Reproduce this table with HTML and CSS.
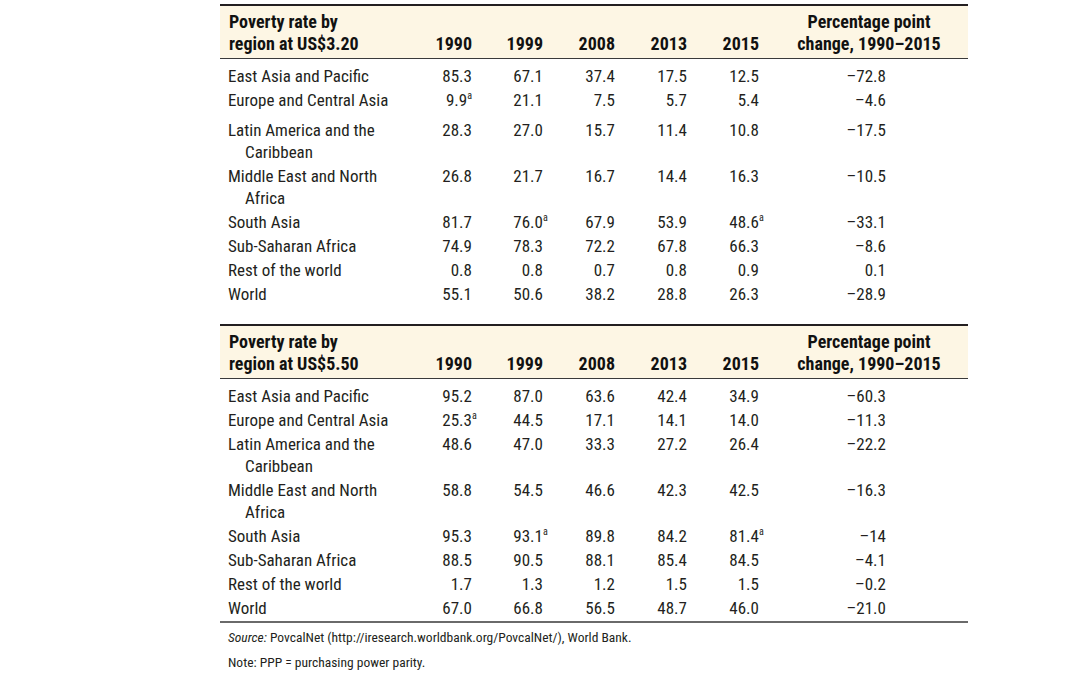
FILE: index.html
```html
<!DOCTYPE html>
<html lang="en">
<head>
<meta charset="utf-8">
<title>Poverty rate by region</title>
<link rel="stylesheet" href="styles.css">
</head>
<body>
<div class="page">
  <table class="ptable">
    <colgroup>
      <col class="c-label"><col class="c-y72"><col class="c-y71"><col class="c-y72"><col class="c-y72"><col class="c-y72"><col class="c-pct">
    </colgroup>
    <thead>
      <tr>
        <th class="lbl">Poverty rate by<br>region at US$3.20</th>
        <th class="num">1990</th>
        <th class="num">1999</th>
        <th class="num">2008</th>
        <th class="num">2013</th>
        <th class="num">2015</th>
        <th class="pct">Percentage point<br>change, 1990–2015</th>
      </tr>
    </thead>
    <tbody>
      <tr class="first"><td class="lbl">East Asia and Pacific</td><td class="num">85.3</td><td class="num">67.1</td><td class="num">37.4</td><td class="num">17.5</td><td class="num">12.5</td><td class="pct">–72.8</td></tr>
      <tr><td class="lbl">Europe and Central Asia</td><td class="num">9.9<span class="fn-in">a</span></td><td class="num">21.1</td><td class="num">7.5</td><td class="num">5.7</td><td class="num">5.4</td><td class="pct">–4.6</td></tr>
      <tr class="gap"><td class="lbl">Latin America and the<span class="cont">Caribbean</span></td><td class="num">28.3</td><td class="num">27.0</td><td class="num">15.7</td><td class="num">11.4</td><td class="num">10.8</td><td class="pct">–17.5</td></tr>
      <tr><td class="lbl">Middle East and North<span class="cont">Africa</span></td><td class="num">26.8</td><td class="num">21.7</td><td class="num">16.7</td><td class="num">14.4</td><td class="num">16.3</td><td class="pct">–10.5</td></tr>
      <tr><td class="lbl">South Asia</td><td class="num">81.7</td><td class="num">76.0<span class="fn">a</span></td><td class="num">67.9</td><td class="num">53.9</td><td class="num">48.6<span class="fn">a</span></td><td class="pct">–33.1</td></tr>
      <tr><td class="lbl">Sub-Saharan Africa</td><td class="num">74.9</td><td class="num">78.3</td><td class="num">72.2</td><td class="num">67.8</td><td class="num">66.3</td><td class="pct">–8.6</td></tr>
      <tr><td class="lbl">Rest of the world</td><td class="num">0.8</td><td class="num">0.8</td><td class="num">0.7</td><td class="num">0.8</td><td class="num">0.9</td><td class="pct">0.1</td></tr>
      <tr class="last"><td class="lbl">World</td><td class="num">55.1</td><td class="num">50.6</td><td class="num">38.2</td><td class="num">28.8</td><td class="num">26.3</td><td class="pct">–28.9</td></tr>
    </tbody>
  </table>

  <table class="ptable second">
    <colgroup>
      <col class="c-label"><col class="c-y72"><col class="c-y71"><col class="c-y72"><col class="c-y72"><col class="c-y72"><col class="c-pct">
    </colgroup>
    <thead>
      <tr>
        <th class="lbl">Poverty rate by<br>region at US$5.50</th>
        <th class="num">1990</th>
        <th class="num">1999</th>
        <th class="num">2008</th>
        <th class="num">2013</th>
        <th class="num">2015</th>
        <th class="pct">Percentage point<br>change, 1990–2015</th>
      </tr>
    </thead>
    <tbody>
      <tr class="first"><td class="lbl">East Asia and Pacific</td><td class="num">95.2</td><td class="num">87.0</td><td class="num">63.6</td><td class="num">42.4</td><td class="num">34.9</td><td class="pct">–60.3</td></tr>
      <tr><td class="lbl">Europe and Central Asia</td><td class="num">25.3<span class="fn">a</span></td><td class="num">44.5</td><td class="num">17.1</td><td class="num">14.1</td><td class="num">14.0</td><td class="pct">–11.3</td></tr>
      <tr><td class="lbl">Latin America and the<span class="cont">Caribbean</span></td><td class="num">48.6</td><td class="num">47.0</td><td class="num">33.3</td><td class="num">27.2</td><td class="num">26.4</td><td class="pct">–22.2</td></tr>
      <tr><td class="lbl">Middle East and North<span class="cont">Africa</span></td><td class="num">58.8</td><td class="num">54.5</td><td class="num">46.6</td><td class="num">42.3</td><td class="num">42.5</td><td class="pct">–16.3</td></tr>
      <tr><td class="lbl">South Asia</td><td class="num">95.3</td><td class="num">93.1<span class="fn">a</span></td><td class="num">89.8</td><td class="num">84.2</td><td class="num">81.4<span class="fn">a</span></td><td class="pct">–14</td></tr>
      <tr><td class="lbl">Sub-Saharan Africa</td><td class="num">88.5</td><td class="num">90.5</td><td class="num">88.1</td><td class="num">85.4</td><td class="num">84.5</td><td class="pct">–4.1</td></tr>
      <tr><td class="lbl">Rest of the world</td><td class="num">1.7</td><td class="num">1.3</td><td class="num">1.2</td><td class="num">1.5</td><td class="num">1.5</td><td class="pct">–0.2</td></tr>
      <tr class="last"><td class="lbl">World</td><td class="num">67.0</td><td class="num">66.8</td><td class="num">56.5</td><td class="num">48.7</td><td class="num">46.0</td><td class="pct">–21.0</td></tr>
    </tbody>
  </table>

  <p class="source"><em>Source:</em> PovcalNet (http://iresearch.worldbank.org/PovcalNet/), World Bank.</p>
  <p class="note">Note: PPP = purchasing power parity.</p>
</div>
</body>
</html>
```

FILE: styles.css
```css
body {
  margin: 0;
  background: #ffffff;
  color: #231f20;
  font-family: "Roboto Condensed", "Roboto", sans-serif;
}

.page {
  width: 748px;
  margin: 4px 0 0 220px;
}

.ptable {
  width: 748px;
  table-layout: fixed;
  border-collapse: collapse;
  font-size: 17px;
  line-height: 22px;
  border-top: 2px solid #231f20;
}

.ptable.second {
  margin-top: 17px;
  border-bottom: 2px solid #6a6a6a;
}

.c-label { width: 180px; }
.c-y72 { width: 72px; }
.c-y71 { width: 71px; }
.c-pct { width: 209px; }

.ptable thead tr {
  background: #fdf6e4;
  border-bottom: 1px solid #3a3a3a;
}

.ptable th {
  font-size: 18px;
  font-weight: bold;
  color: #111111;
  vertical-align: bottom;
  padding: 5px 0 3px 0;
}

.ptable th.lbl {
  text-align: left;
  padding-left: 9px;
}

.ptable th.num {
  text-align: right;
}

.ptable th.pct {
  text-align: center;
  padding-left: 11px;
}

.ptable td {
  padding: 1px 0;
  vertical-align: top;
}

.ptable tr.first td { padding-top: 6px; }
.ptable tr.gap td { padding-top: 7px; }
.ptable tr.last td { padding-bottom: 2px; }

.ptable td.lbl {
  text-align: left;
  padding-left: 8px;
}

.cont {
  display: block;
  padding-left: 17px;
}

.ptable td.num {
  text-align: right;
  white-space: nowrap;
}

.ptable td.pct {
  text-align: right;
  padding-right: 82px;
}

.fn,
.fn-in {
  font-size: 10px;
  line-height: 1;
  vertical-align: 7px;
}

.fn {
  display: inline-block;
  width: 0;
}

.source,
.note {
  margin: 0;
  padding-left: 8px;
  font-size: 13.5px;
  line-height: 18px;
}

.source {
  margin-top: 5px;
}

.note {
  margin-top: 7px;
}
```
